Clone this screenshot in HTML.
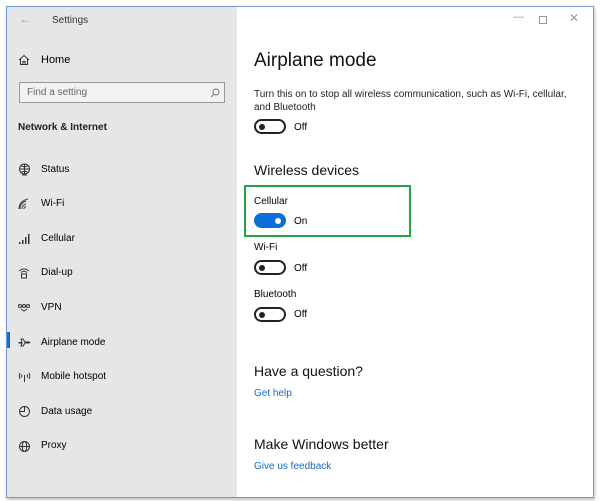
<!DOCTYPE html>
<html><head><style>
*{margin:0;padding:0;box-sizing:border-box}
body{width:600px;height:501px;background:#fff;font-family:"Liberation Sans",sans-serif;position:relative;overflow:hidden}
.win{position:absolute;left:6px;top:6px;width:588px;height:492px;border:1px solid #6f9bd4;box-shadow:1px 2px 3px rgba(0,0,0,.25);background:#fff}
.side{position:absolute;left:0;top:0;width:230px;height:100%;background:#e6e6e6}
.t{position:absolute;white-space:nowrap;color:#000}
.s11{font-size:11px}.s10{font-size:10px}
.ic{position:absolute;left:11px}
.tog{position:absolute;width:32px;height:15px;border:2px solid #222;border-radius:8px}
.tog::after{content:"";position:absolute;left:3px;top:2.5px;width:6px;height:6px;border-radius:50%;background:#222}
.on{background:#0a6fd6;border-color:#0a6fd6}
.on::after{left:auto;right:3px;background:#fff}
.h{font-size:14px;color:#111}
.link{color:#1569c7;font-size:10px}
</style></head><body>
<div class="win">
<div class="side">
<div class="t" style="left:12px;top:5px;color:#999;font-size:12px">←</div>
<div class="t s10" style="left:45px;top:8px;color:#333">Settings</div>
<svg class="ic" style="top:47px" width="12" height="12" viewBox="0 0 12 12"><path d="M1 6 L6 1.5 L11 6 M2.5 5 V10.5 H9.5 V5 M5 10.5 V7.5 H7 V10.5" fill="none" stroke="#333" stroke-width="1"/></svg>
<div class="t s11" style="left:34px;top:47px">Home</div>
<div style="position:absolute;left:12px;top:75px;width:206px;height:21px;border:1px solid #999;background:#f2f2f2"></div>
<div class="t s10" style="left:20px;top:80px;color:#666">Find a setting</div>
<svg style="position:absolute;left:203px;top:81px" width="10" height="10" viewBox="0 0 10 10"><circle cx="6" cy="4" r="3" fill="none" stroke="#777"/><path d="M4 6 L1 9" stroke="#777"/></svg>
<div class="t s10" style="left:11px;top:115px;font-weight:bold;color:#222">Network &amp; Internet</div>
<svg class="ic" style="top:156px" width="13" height="13" viewBox="0 0 13 13" fill="none" stroke="#333"><circle cx="6.5" cy="6" r="5"/><path d="M1.5 6H11.5M6.5 1V11M3 2.5Q6.5 5 10 2.5M3 9.5Q6.5 7 10 9.5"/><path d="M4 12H9"/></svg>
<div class="t s10" style="left:34px;top:157px">Status</div>
<svg class="ic" style="top:191px" width="12" height="12" viewBox="0 0 12 12" fill="none" stroke="#444"><path d="M2 11Q2 5 8 3M4 11Q4 7 8 6M6 11Q6 9 8 8.5M1 11Q1 3 10 1"/></svg>
<div class="t s10" style="left:34px;top:191px">Wi-Fi</div>
<svg class="ic" style="top:226px" width="12" height="12" viewBox="0 0 12 12" fill="#333"><rect x="1" y="9" width="1.5" height="2"/><rect x="4" y="7" width="1.5" height="4"/><rect x="7" y="4" width="1.5" height="7"/><rect x="10" y="1" width="1.5" height="10"/></svg>
<div class="t s10" style="left:34px;top:226px">Cellular</div>
<svg class="ic" style="top:260px" width="12" height="12" viewBox="0 0 12 12" fill="none" stroke="#333"><path d="M1 4Q6 0 11 4M3 5.5Q6 3 9 5.5M3.5 7H8.5V11H3.5Z"/></svg>
<div class="t s10" style="left:34px;top:260px">Dial-up</div>
<svg class="ic" style="top:296px" width="12" height="10" viewBox="0 0 12 10" fill="none" stroke="#333"><circle cx="2" cy="3" r="1.5"/><circle cx="6" cy="3" r="1.5"/><circle cx="10" cy="3" r="1.5"/><path d="M3 6L6 8L9 6"/></svg>
<div class="t s10" style="left:34px;top:295px">VPN</div>
<div style="position:absolute;left:0;top:325px;width:3px;height:16px;background:#0a6fd6"></div>
<svg class="ic" style="top:329px" width="13" height="13" viewBox="0 0 13 13" fill="none" stroke="#333"><path d="M1 6.5H4L3 3H5L7 6H11Q12.5 6.5 11 7H7L5 10H3L4 7H1Z"/></svg>
<div class="t s10" style="left:34px;top:330px">Airplane mode</div>
<svg class="ic" style="top:364px" width="13" height="12" viewBox="0 0 13 12" fill="none" stroke="#333"><path d="M6.5 4V11M2 2Q0.5 5 2 8M11 2Q12.5 5 11 8M4 3.5Q3 5 4 6.5M9 3.5Q10 5 9 6.5"/></svg>
<div class="t s10" style="left:34px;top:364px">Mobile hotspot</div>
<svg class="ic" style="top:398px" width="13" height="13" viewBox="0 0 13 13" fill="none" stroke="#333"><circle cx="6.5" cy="6.5" r="5"/><path d="M6.5 1.5V6.5H1.5"/></svg>
<div class="t s10" style="left:34px;top:399px">Data usage</div>
<svg class="ic" style="top:433px" width="13" height="13" viewBox="0 0 13 13" fill="none" stroke="#333"><circle cx="6.5" cy="6.5" r="5"/><ellipse cx="6.5" cy="6.5" rx="2.2" ry="5"/><path d="M1.5 6.5H11.5"/></svg>
<div class="t s10" style="left:34px;top:433px">Proxy</div>
</div>
<div class="t" style="left:506px;top:4px;color:#999;font-size:11px">—</div>
<div style="position:absolute;left:532px;top:9px;width:8px;height:8px;border:1px solid #999"></div>
<div class="t" style="left:562px;top:4px;color:#999;font-size:12px">✕</div>
<div class="t" style="left:247px;top:43px;font-size:19px;color:#111">Airplane mode</div>
<div class="t s10" style="left:247px;top:81px;color:#222;line-height:13px">Turn this on to stop all wireless communication, such as Wi-Fi, cellular,<br>and Bluetooth</div>
<div class="tog" style="left:247px;top:112px"></div><div class="t s10" style="left:287px;top:115px">Off</div>
<div class="t h" style="left:247px;top:155px">Wireless devices</div>
<div style="position:absolute;left:237px;top:178px;width:167px;height:52px;border:2px solid #22a447"></div>
<div class="t s10" style="left:247px;top:189px">Cellular</div>
<div class="tog on" style="left:247px;top:206px"></div><div class="t s10" style="left:287px;top:209px">On</div>
<div class="t s10" style="left:247px;top:235px">Wi-Fi</div>
<div class="tog" style="left:247px;top:253px"></div><div class="t s10" style="left:287px;top:256px">Off</div>
<div class="t s10" style="left:247px;top:282px">Bluetooth</div>
<div class="tog" style="left:247px;top:300px"></div><div class="t s10" style="left:287px;top:302px">Off</div>
<div class="t h" style="left:247px;top:356px">Have a question?</div>
<div class="t link" style="left:247px;top:381px">Get help</div>
<div class="t h" style="left:247px;top:429px">Make Windows better</div>
<div class="t link" style="left:247px;top:454px">Give us feedback</div>
</div>
</body></html>
